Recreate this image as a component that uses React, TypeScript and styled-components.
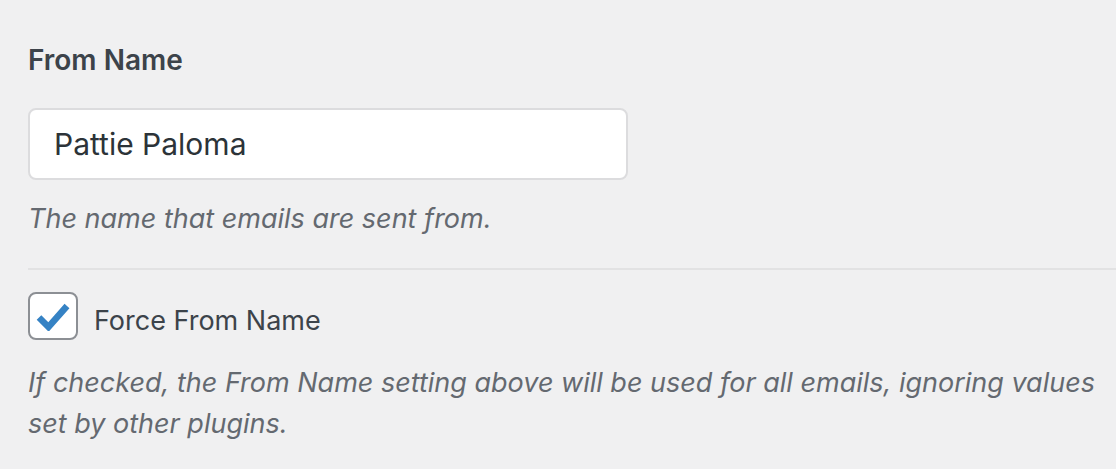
import styled, { createGlobalStyle } from "styled-components";

const GlobalStyle = createGlobalStyle`
  html, body {
    margin: 0;
    padding: 0;
    background: #f0f0f1;
  }
  body {
    font-family: Inter, "Noto Sans", "Liberation Sans", sans-serif;
    color: #3c434a;
  }
`;

const App = () => {
  return (
    <>
      <GlobalStyle />
      <Page>
        <Field>
          <Label htmlFor="from-name">From Name</Label>
          <TextInput id="from-name" type="text" defaultValue="Pattie Paloma" />
          <Description>The name that emails are sent from.</Description>
        </Field>
        <Divider />
        <Field>
          <CheckRow>
            <CheckBox>
              <svg width="34" height="30" viewBox="0 0 34 30">
                <path d="M3 16.5 L12.5 26 L31 5" fill="none" stroke="#3582c4" strokeWidth="6.5" strokeLinejoin="miter" />
              </svg>
            </CheckBox>
            <CheckLabel>Force From Name</CheckLabel>
          </CheckRow>
          <Description $gap={22}>
            If checked, the From Name setting above will be used for all emails, ignoring values set by other plugins.
          </Description>
        </Field>
      </Page>
    </>
  );
};
export default App;

const Page = styled.div`
  padding: 43px 0 0 28px;
  display: flex;
  flex-direction: column;
`;

const Field = styled.div`
  display: flex;
  flex-direction: column;
  align-items: flex-start;
  padding-right: 10px;
`;

const Label = styled.label`
  font-size: 28px;
  font-weight: 600;
  line-height: 34px;
  color: #3c434a;
  margin-bottom: 31px;
`;

const TextInput = styled.input`
  box-sizing: border-box;
  width: 600px;
  height: 72px;
  border: 2px solid #dcdcde;
  border-radius: 8px;
  background: #fff;
  padding: 0 24px;
  font-family: inherit;
  font-size: 30px;
  color: #2c3338;
  outline: none;
`;

const Description = styled.p<{ $gap?: number }>`
  margin: ${(p) => p.$gap ?? 18}px 0 0;
  font-size: 27px;
  line-height: 41px;
  font-style: italic;
  color: #646970;
`;

const Divider = styled.hr`
  border: 0;
  border-top: 2px solid #e2e2e3;
  margin: 29px 0 22px;
  width: 100%;
`;

const CheckRow = styled.div`
  display: flex;
  align-items: center;
  gap: 16px;
`;

const CheckBox = styled.span`
  box-sizing: border-box;
  width: 50px;
  height: 48px;
  border: 2px solid #8c8f94;
  border-radius: 8px;
  background: #fff;
  display: flex;
  align-items: center;
  justify-content: center;
`;

const CheckLabel = styled.span`
  font-size: 27px;
  color: #3c434a;
  margin-top: 8px;
`;
